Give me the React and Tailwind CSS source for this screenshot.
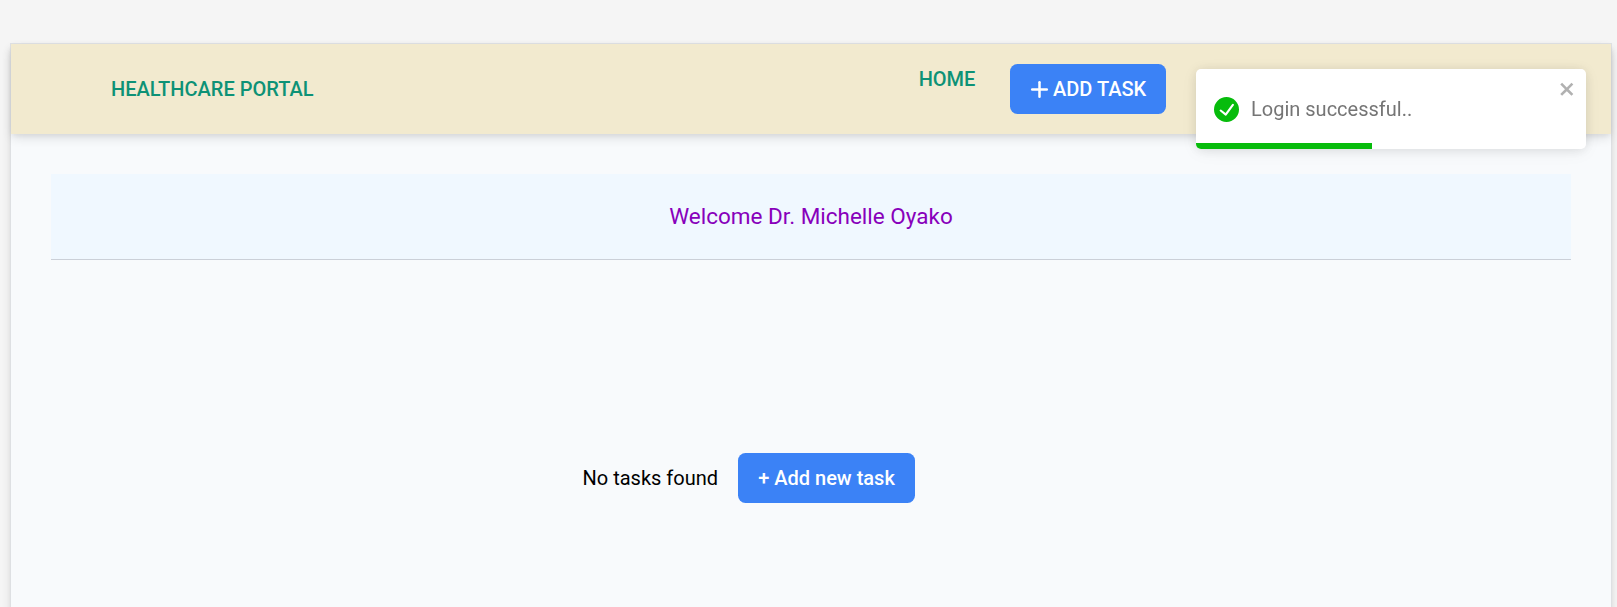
import { LuPlus } from "react-icons/lu";

function Header() {
  return (
    <header className="flex h-[90px] items-center bg-[#f2eacf] pl-[100px] pr-[100px] font-medium text-[#0d9276] shadow-[0_5px_10px_-1px_rgba(0,0,0,0.11),0_2.5px_5px_-1px_rgba(0,0,0,0.06)]">
      <span className="tracking-normal">HEALTHCARE PORTAL</span>
      <nav className="ml-auto mr-[345px] flex items-start">
        <a className="mr-[34.6px] leading-[30px]">HOME</a>
        <button className="flex h-[50px] w-[156px] items-center rounded-[7.5px] bg-[#3b82f6] pl-[17px] text-white">
          <LuPlus className="size-[25px]" strokeWidth={2.4} />
          <span className="ml-px whitespace-nowrap">ADD TASK</span>
        </button>
      </nav>
    </header>
  );
}

function Toast() {
  return (
    <div className="fixed left-[1196px] top-[69px] flex h-20 w-[390px] items-start overflow-hidden rounded-[5px] bg-white p-[10px] text-[#757575] shadow-[0_1px_12px_rgba(0,0,0,0.1),0_3px_18px_rgba(0,0,0,0.05)]">
      <div className="flex h-full flex-1 items-center pl-2">
        <svg viewBox="0 0 24 24" className="size-[25px] fill-[#07bc0c]">
          <path d="M12 0a12 12 0 1012 12A12.014 12.014 0 0012 0zm6.927 8.2l-6.845 9.289a1.011 1.011 0 01-1.43.188l-4.888-3.908a1 1 0 111.25-1.562l4.076 3.261 6.227-8.451a1 1 0 111.61 1.183z" />
        </svg>
        <span className="ml-3">Login successful..</span>
      </div>
      <button aria-label="close" className="h-5 w-[17.5px] opacity-30">
        <svg viewBox="0 0 14 16" className="h-5 w-[17.5px] fill-black">
          <path fillRule="evenodd" d="M7.71 8.23l3.75 3.75-1.48 1.48-3.75-3.75-3.75 3.75L1 11.98l3.75-3.75L1 4.48 2.48 3l3.75 3.75L9.98 3l1.48 1.48-3.75 3.75z" />
        </svg>
      </button>
      <div className="absolute bottom-0 left-0 h-[6px] w-[176px] bg-[#07bc0c]" />
    </div>
  );
}

export default function App() {
  return (
    <div className="h-[607px] overflow-hidden bg-[#f5f5f5] pl-[10px] pr-[5px] pt-[43px] font-['Roboto',sans-serif] text-[20px] leading-[30px] text-black">
      <main className="h-[700px] border border-[#dee0e3] bg-[#f8fafc] shadow-[0_5px_10px_-1px_rgba(0,0,0,0.11),0_2.5px_5px_-1px_rgba(0,0,0,0.06)]">
        <Header />
        <div className="px-10 pt-10">
          <h1 className="flex h-[86px] items-center justify-center border-b border-[#cbd0d8] bg-[#f0f8ff] pb-[2px] text-[22.5px] text-[#8800bb]">
            Welcome Dr. Michelle Oyako
          </h1>
        </div>
        <div className="mt-[193px] flex items-center pl-[571.5px]">
          <p className="w-[155.5px]">No tasks found</p>
          <button className="h-[50px] w-[177px] whitespace-nowrap rounded-[7.5px] bg-[#3b82f6] font-medium text-white">
            + Add new task
          </button>
        </div>
      </main>
      <Toast />
    </div>
  );
}
